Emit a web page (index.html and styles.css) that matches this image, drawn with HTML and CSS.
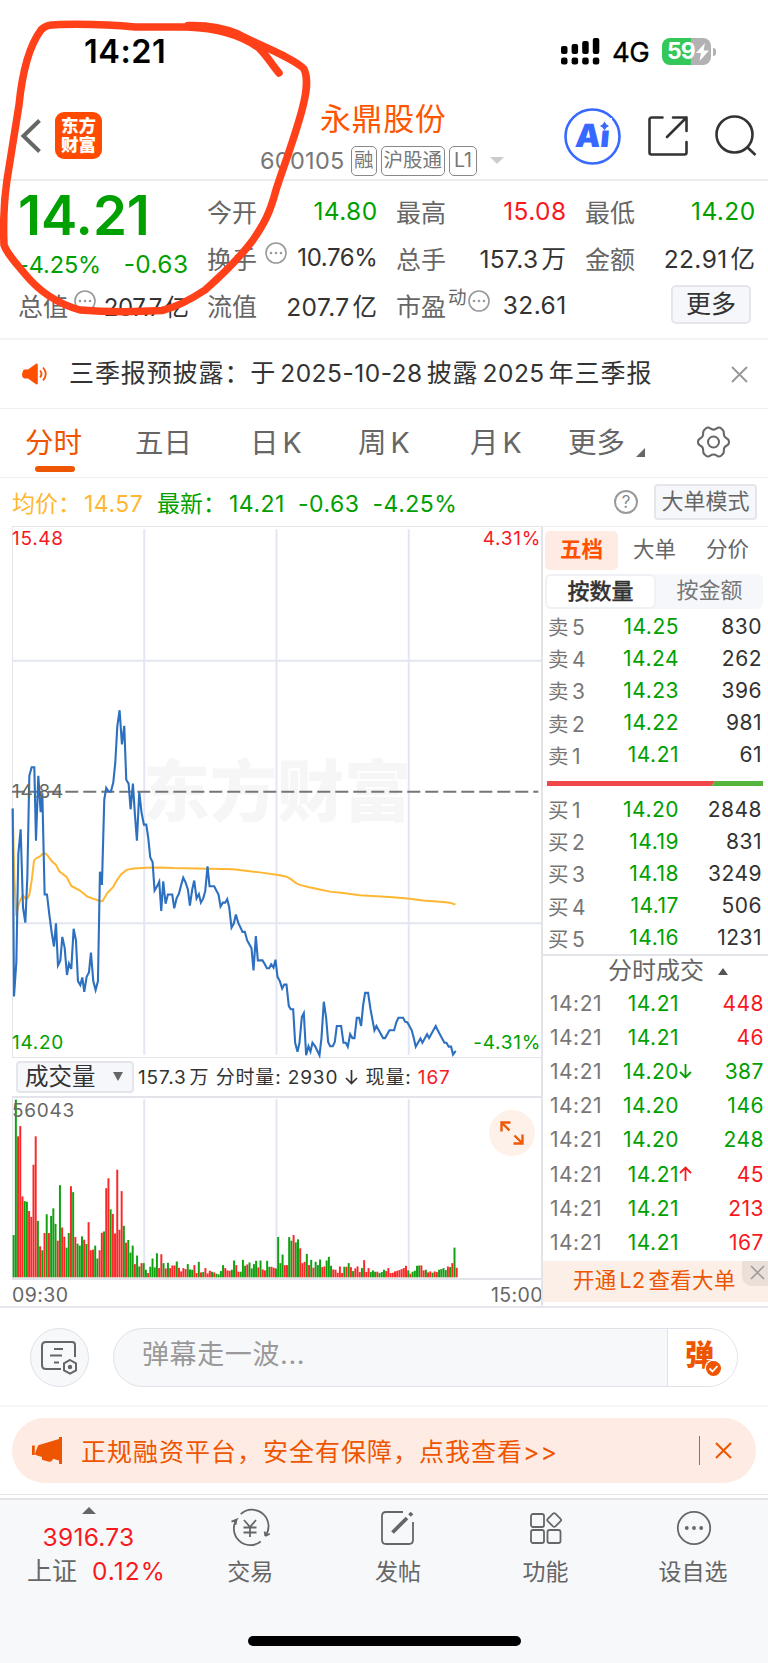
FILE: index.html
```html
<!DOCTYPE html>
<html lang="zh-CN">
<head>
<meta charset="utf-8">
<title>永鼎股份 600105</title>
<link rel="stylesheet" href="styles.css">
</head>
<body>
<div class="screen">
  <div class="status">
    <span class="clock">14:21</span>
    <div class="status-right">
      <svg class="signal" width="39" height="28" viewBox="0 0 39 28">
        <rect x="0" y="9" width="6.5" height="8" rx="2"/><rect x="10.6" y="7" width="6.5" height="10" rx="2"/><rect x="21.2" y="4" width="6.5" height="13" rx="2"/><rect x="31.8" y="1" width="6.5" height="16" rx="2"/>
        <rect x="0" y="20.5" width="6.5" height="7" rx="2.2"/><rect x="10.6" y="20.5" width="6.5" height="7" rx="2.2"/><rect x="21.2" y="20.5" width="6.5" height="7" rx="2.2"/><rect x="31.8" y="20.5" width="6.5" height="7" rx="2.2"/>
      </svg>
      <span class="net">4G</span>
      <div class="battery"><span>59</span>
        <svg width="13" height="18" viewBox="0 0 13 18"><path d="M9 0 0 10h5L3.6 18 13 7.4H7.6z" fill="#fff"/></svg>
      </div>
      <i class="nub"></i>
    </div>
  </div>

  <header class="header">
    <svg class="back" width="20" height="34" viewBox="0 0 20 34"><path d="M18.5 1.5 2.5 17l16 15.500" fill="none" stroke="#666" stroke-width="4"/></svg>
    <div class="logo">东方<br>财富</div>
    <div class="title">
      <h1>永鼎股份</h1>
      <div class="sub"><span class="code">600105</span><span class="tag">融</span><span class="tag">沪股通</span><span class="tag l1">L1</span><i class="drop"></i></div>
    </div>
    <svg class="ai" width="57" height="57" viewBox="0 0 57 57">
      <circle cx="28.500" cy="28.500" r="27" fill="#fff" stroke="#3768ff" stroke-width="2.600"/>
      <text x="11" y="39" class="ai-text" transform="skewX(-5) translate(3 0)">Ai</text>
      <rect x="34" y="10" width="14" height="12.500" fill="#fff"/>
      <path d="M40.500 13.500 42.200 16.300 45 18l-2.800 1.700-1.700 2.800-1.700-2.800L36 18l2.800-1.700z" fill="#3768ff"/>
    </svg>
    <svg class="share" width="40" height="40" viewBox="0 0 40 40" fill="none" stroke="#333" stroke-width="2.600" stroke-linecap="round" stroke-linejoin="round">
      <path d="M14.500 1.500H3.500a2 2 0 0 0-2 2v33a2 2 0 0 0 2 2h33a2 2 0 0 0 2-2V26M25 1.500h13.500V15M38.500 1.500 19 21"/>
    </svg>
    <svg class="search" width="42" height="42" viewBox="0 0 42 42" fill="none" stroke="#333" stroke-width="2.600"><circle cx="19.500" cy="19.500" r="18"/><path d="M32 32l8.500 8"/></svg>
  </header>

  <section class="quote">
    <div class="cell big g">14.21</div>
    <div class="cell"><span>今开</span><b class="g">14.80</b></div>
    <div class="cell"><span>最高</span><b class="r">15.08</b></div>
    <div class="cell"><span>最低</span><b class="g">14.20</b></div>
    <div class="cell chg g"><b class="pct">-4.25%</b><b class="g">-0.63</b></div>
    <div class="cell"><span>换手</span><svg class="dots" viewBox="0 0 22 22"><use href="#dots"/></svg><b class="n">10.76%</b></div>
    <div class="cell"><span>总手</span><b>157.3<em>万</em></b></div>
    <div class="cell"><span>金额</span><b>22.91<em>亿</em></b></div>
    <div class="cell cap"><span>总值</span><svg class="dots" viewBox="0 0 22 22"><use href="#dots"/></svg><b class="n">207.7<em>亿</em></b></div>
    <div class="cell"><span>流值</span><b>207.7<em>亿</em></b></div>
    <div class="cell pe"><span>市盈</span><small>动</small><svg class="dots" viewBox="0 0 22 22"><use href="#dots"/></svg><b>32.61</b></div>
    <div class="cell end"><span class="more">更多</span></div>
  </section>

  <section class="notice">
    <svg width="26" height="22" viewBox="0 0 26 22"><path d="M1 8q0-1.500 1.500-1.500H6L14 .8Q15.800 0 15.800 2v18q0 2-1.800 1.200L6 15.500H2.500Q0 15 0 11z" fill="#ff5000"/><path d="M18 7.500q3 3.500 0 7M21 4.500q5.500 6.500 0 13" fill="none" stroke="#ff5000" stroke-width="1.800"/></svg>
    <p>三季报预披露：于<em>2025-10-28</em>披露<em>2025</em>年三季报</p>
    <svg class="x" width="17" height="17" viewBox="0 0 17 17"><path d="M1 1l15 15M16 1 1 16" stroke="#999" stroke-width="2"/></svg>
  </section>

  <nav class="periods">
    <span class="on">分时</span><span>五日</span><span>日<em>K</em></span><span>周<em>K</em></span><span>月<em>K</em></span><span class="more-tab">更多</span>
    <svg class="corner" width="9" height="9" viewBox="0 0 9 9"><path d="M9 0v9H0z" fill="#666"/></svg>
    <svg class="gear" width="33" height="32" viewBox="0 0 33 32" fill="none" stroke="#666" stroke-width="2"><path d="M8 3.200C10 .8 12 1.200 13.300 2.400c2 1.500 4.400 1.500 6.400 0C21 1.200 23 .8 25 3.200c1.700 1.200 2 2.600 1.800 4.200-.1 2.400 1 4.300 3 5.100 1.600.7 2.200 1.900 2.200 3.500s-.6 2.800-2.200 3.500c-2 .8-3.100 2.700-3 5.100.2 1.600-.1 3-1.800 4.200-2 2.400-4 2-5.300.8-2-1.500-4.400-1.500-6.400 0C12 30.800 10 31.200 8 28.800c-1.700-1.200-2-2.600-1.800-4.200.1-2.400-1-4.300-3-5.100C1.600 18.800 1 17.600 1 16s.6-2.800 2.200-3.500c2-.8 3.100-2.700 3-5.100C6 5.800 6.300 4.400 8 3.200z"/><circle cx="16.500" cy="16" r="5.500"/></svg>
  </nav>

  <div class="info">
    <span class="avg">均价：<em>14.57</em></span>
    <span class="last g">最新：<em>14.21</em><em>-0.63</em><em>-4.25%</em></span>
    <span class="help">?</span><span class="mode">大单模式</span>
  </div>

  <main class="board">
    <div class="charts">
      <div class="price">
        <span class="watermark">东方财富</span>
        <svg class="plot" viewBox="36 18 1588 1487" preserveAspectRatio="none" fill="none">
          <g stroke="#e3e6f0" stroke-width="2"><path d="M36 393H1624M36 1130H1624M433 24V1499M830 24V1499M1227 24V1499"/></g>
          <path d="M36 761H190M196 761H1616" stroke="#757575" stroke-width="2" class="dash"/>
          <polyline stroke="#ffb733" stroke-width="2" points="38,808 43,1000 49,1110 55,1080 62,1062 69,1052 76,1060 82,1060 88,1050 95,1010 102,955 108,948 120,942 130,934 137,934 145,942 155,955 168,966 178,984 200,1000 214,1025 240,1038 262,1055 300,1067 308,1067 322,1045 340,1028 347,1015 363,993 380,980 400,976 440,974 480,973 520,975 700,978 780,987 840,995 860,999 870,1004 890,1018 900,1022 925,1028 960,1035 990,1041 1030,1045 1080,1051 1130,1054 1180,1057 1230,1061 1270,1066 1330,1070 1350,1072 1367,1077"/>
          <polyline stroke="#2d70bf" stroke-width="2.100" points="38,808 42,1335 49,1240 55,935 62,866 69,1085 76,1128 82,1000 88,716 95,692 103,692 108,898 115,716 122,818 127,765 134,1049 141,1049 148,1105 155,1155 162,1195 168,1130 174,1248 181,1235 187,1168 194,1198 201,1275 207,1243 214,1258 221,1145 228,1178 234,1292 241,1303 247,1282 253,1322 260,1280 267,1268 273,1212 280,1292 287,1317 294,1292 300,985 306,1022 313,783 319,750 326,760 333,760 340,735 346,680 352,578 359,532 366,628 373,576 379,727 386,738 392,810 399,738 405,825 411,898 418,762 425,820 432,853 439,853 445,890 451,945 458,958 464,1038 471,1027 478,1013 484,1095 490,1012 497,1075 504,1049 517,1049 523,1088 530,1060 537,1047 544,1022 550,1002 557,1015 564,1035 570,1080 577,1035 583,1010 590,1060 597,1048 603,1072 610,1060 616,1040 623,970 629,1026 643,1026 649,1037 656,1049 662,1083 669,1072 676,1072 682,1062 688,1085 695,1142 702,1130 708,1105 715,1128 722,1142 728,1154 735,1154 742,1178 748,1188 755,1200 761,1262 768,1166 774,1234 788,1234 795,1245 801,1256 808,1256 814,1245 821,1254 827,1232 833,1280 840,1292 847,1313 853,1302 860,1302 867,1362 873,1371 880,1371 886,1465 893,1490 899,1465 906,1393 912,1382 919,1500 926,1475 932,1490 938,1465 946,1475 959,1500 965,1452 972,1350 979,1395 985,1463 991,1475 999,1475 1005,1463 1011,1418 1024,1418 1031,1465 1038,1465 1044,1476 1051,1441 1058,1452 1064,1452 1071,1395 1078,1395 1084,1418 1090,1360 1096,1325 1105,1325 1112,1370 1118,1400 1124,1430 1130,1418 1137,1430 1150,1452 1156,1452 1169,1430 1183,1430 1190,1407 1196,1395 1210,1395 1216,1406 1223,1408 1236,1430 1242,1452 1248,1476 1262,1453 1268,1465 1282,1441 1288,1452 1308,1418 1314,1430 1334,1465 1340,1465 1347,1476 1354,1476 1360,1498 1368,1488"/>
        </svg>
        <span class="lab tl r">15.48</span><span class="lab tr r">4.31%</span>
        <span class="lab ml">14.84</span>
        <span class="lab bl g">14.20</span><span class="lab br g">-4.31%</span>
      </div>
      <div class="vol-head"><span class="vol-btn">成交量<svg width="10" height="9" viewBox="0 0 10 9"><path d="M0 0h10L5 9z" fill="#666"/></svg></span><p>157.3<em>万</em> 分时量: 2930 <svg class="dn" width="13" height="16" viewBox="0 0 13 16"><path d="M6.500 1v13.500M1 9l5.500 5.500L12 9" fill="none" stroke="#333" stroke-width="1.700"/></svg> 现量: <span class="r">167</span></p></div>
      <div class="volume">
        <svg class="plot" id="volume" viewBox="36 126 1588 545" preserveAspectRatio="none">
          <path d="M433 130V671M830 130V671M1227 130V671" stroke="#e3e6f0" stroke-width="2" fill="none"/>
        </svg>
        <span class="lab vmax">56043</span>
        <span class="expand"><svg width="24" height="24" viewBox="0 0 24 24" fill="none" stroke="#ee5a0a" stroke-width="2.400"><path d="M1.500 10.500v-9h9M1.500 1.500l8 8M13.500 22.500h9v-9M22.500 22.500l-8-8"/></svg></span>
      </div>
      <div class="times"><span>09:30</span><span>15:00</span></div>
    </div>

    <aside class="side">
      <div class="side-tabs"><span class="on">五档</span><span>大单</span><span>分价</span></div>
      <div class="seg"><span class="on">按数量</span><span>按金额</span></div>
      <div class="book">
        <div><span>卖<em>5</em></span><b>14.25</b><i>830</i></div>
        <div><span>卖<em>4</em></span><b>14.24</b><i>262</i></div>
        <div><span>卖<em>3</em></span><b>14.23</b><i>396</i></div>
        <div><span>卖<em>2</em></span><b>14.22</b><i>981</i></div>
        <div><span>卖<em>1</em></span><b>14.21</b><i>61</i></div>
      </div>
      <svg class="ratio" width="216" height="5" viewBox="0 0 216 5"><path d="M0 0h168l-3.500 5H0z" fill="#f04848"/><path d="M168 0h48v5h-51.500z" fill="#55b53c"/></svg>
      <div class="book">
        <div><span>买<em>1</em></span><b>14.20</b><i>2848</i></div>
        <div><span>买<em>2</em></span><b>14.19</b><i>831</i></div>
        <div><span>买<em>3</em></span><b>14.18</b><i>3249</i></div>
        <div><span>买<em>4</em></span><b>14.17</b><i>506</i></div>
        <div><span>买<em>5</em></span><b>14.16</b><i>1231</i></div>
      </div>
      <div class="deal-head">分时成交<svg width="10" height="7" viewBox="0 0 10 7"><path d="M5 0l5 7H0z" fill="#555"/></svg></div>
      <div class="deals">
        <div><span>14:21</span><b>14.21</b><u></u><i class="r">448</i></div>
        <div><span>14:21</span><b>14.21</b><u></u><i class="r">46</i></div>
        <div><span>14:21</span><b>14.20</b><u><svg class="g" viewBox="0 0 13 16"><path d="M6.500 1v13.500M1 9l5.500 5.500L12 9"/></svg></u><i class="g">387</i></div>
        <div><span>14:21</span><b>14.20</b><u></u><i class="g">146</i></div>
        <div><span>14:21</span><b>14.20</b><u></u><i class="g">248</i></div>
        <div><span>14:21</span><b>14.21</b><u><svg class="r" viewBox="0 0 13 16"><path d="M6.500 15V1.500M1 7l5.500-5.500L12 7"/></svg></u><i class="r">45</i></div>
        <div><span>14:21</span><b>14.21</b><u></u><i class="r">213</i></div>
        <div><span>14:21</span><b>14.21</b><u></u><i class="r">167</i></div>
      </div>
      <div class="l2">开通<em>L2</em>查看大单<span class="l2x"><svg width="15" height="15" viewBox="0 0 15 15"><path d="M1 1l13 13M14 1 1 14" stroke="#999" stroke-width="1.500"/></svg></span></div>
    </aside>
  </main>

  <section class="chat">
    <span class="round"><svg width="38" height="34" viewBox="0 0 38 34" fill="none" stroke="#666" stroke-width="2"><path d="M20 28H5q-4 0-4-4V5q0-4 4-4h26q3 0 3 3v12M13 8h9M9 14.500h12M13 21.500h5"/><path d="M29 19l6 3.400v6.900l-6 3.400-6-3.400v-6.900z"/><circle cx="29" cy="26" r="1.200" fill="#666"/></svg></span>
    <div class="input"><span class="ph">弹幕走一波...</span><span class="dan">弹<svg width="15" height="15" viewBox="0 0 15 15"><circle cx="7.500" cy="7.500" r="7.500" fill="#ee5500"/><path d="M3.500 7.500l3 3 5-5.500" fill="none" stroke="#fff" stroke-width="1.800"/></svg></span></div>
  </section>

  <section class="promo-wrap">
    <div class="promo">
      <svg width="31" height="27" viewBox="0 0 31 27" fill="#ee5500"><path d="M0 8.500h2.800V18H0zM5.500 10q0-1.500 1.500-2L27 2V0h3v27h-3v-3.500l-6-1.800q-1 3.500-4 3l-7-2V20l-5-1.500q-2-.5-2-2z"/></svg>
      <p>正规融资平台，安全有保障，点我查看&gt;&gt;</p>
      <i></i>
      <svg width="17" height="17" viewBox="0 0 17 17"><path d="M1 1l15 15M16 1 1 16" stroke="#ee5500" stroke-width="2"/></svg>
    </div>
  </section>

  <footer class="tabbar">
    <div class="index"><svg width="14" height="7" viewBox="0 0 14 7"><path d="M7 0l7 7H0z" fill="#666"/></svg><b>3916.73</b><p>上证<b>0.12%</b></p></div>
    <div class="tab"><svg width="40" height="36" viewBox="1 0 40 36" fill="none" stroke="#666" stroke-width="1.800"><path d="M10.700 4.200A16.500 16.500 0 0 1 35.300 26l4.500-2.300M35.300 26l-.6-4.500M30.700 31.500A16.500 16.500 0 0 1 6.500 9.700l-5 2M6.500 9.700l-1 5"/><path d="M14 10l6 7 6-7M20 17v10M13.500 17.500h13M13.500 22.500h13"/></svg><span>交易</span></div>
    <div class="tab"><svg width="36" height="36" viewBox="0 0 36 36" fill="none" stroke="#666" stroke-width="1.800"><path d="M23 2H6Q2 2 2 6v24q0 4 4 4h23q4 0 4-4V12"/><path d="M12.500 22.500 27 8M29.500 5.500l2.500-2.500" stroke-width="3.800"/></svg><span>发帖</span></div>
    <div class="tab"><svg width="34" height="34" viewBox="0 0 34 34" fill="none" stroke="#666" stroke-width="1.800"><rect x="2" y="3" width="13" height="13" rx="2"/><rect x="2" y="19" width="13" height="13" rx="2"/><rect x="18.500" y="19" width="13" height="13" rx="2"/><path d="M24 2.600q1.200-1 2.400 0l5.200 5.200q1.200 1.200 0 2.400l-5.200 5.200q-1.200 1-2.400 0l-5.200-5.200q-1.200-1.200 0-2.400z"/></svg><span>功能</span></div>
    <div class="tab"><svg width="36" height="36" viewBox="0 0 36 36"><circle cx="18" cy="18" r="16.200" fill="none" stroke="#666" stroke-width="1.800"/><g fill="#666"><circle cx="10.800" cy="18" r="1.900"/><circle cx="18" cy="18" r="1.900"/><circle cx="25.200" cy="18" r="1.900"/></g></svg><span>设自选</span></div>
  </footer>
  <div class="home"><i></i></div>

  <svg class="marker" width="320" height="330" viewBox="0 0 320 330" fill="none" stroke="#ff4019" stroke-linecap="round" stroke-linejoin="round">
    <path stroke-width="7.500" d="M188 25.500C206 25 222 27 238 34C256 44 294 58 304 69C309 80 306 95 302 110C293 143 283 168 276 190C270 213 264 224 253 240C238 260 222 275 205 290C190 300 177 307 162 310.500C135 312 105 312 80 310C55 303 38 290 25 274C15 262 7 254 4 245C3 220 4 200 7 180C12 150 16 125 19 105C22 75 29 46 41 30C46 24 53 25 60 24.500C90 24 115 25 135 27H187C215 28 240 34 259 48C268 57 272 65 279 73"/>
    <path stroke-width="5" d="M200 26.500Q235 32 262 45"/>
  </svg>
</div>

<svg width="0" height="0" class="defs"><defs><g id="dots"><circle cx="11" cy="11" r="10" fill="none" stroke="#999" stroke-width="1.600"/><g fill="#999"><circle cx="6" cy="11" r="1.300"/><circle cx="11" cy="11" r="1.300"/><circle cx="16" cy="11" r="1.300"/></g></g></defs></svg>
<script src="volume.js"></script>
</body>
</html>
```

FILE: styles.css
```css
* { box-sizing: border-box; }
body { margin: 0; background: #fff; }
body, h1, p { margin: 0; }
h1, b, i, em, small, u { font: inherit; font-style: normal; text-decoration: none; }
svg { display: block; flex: none; overflow: visible; }
.defs { position: absolute; }
.screen { position: relative; width: 768px; height: 1663px; overflow: hidden; font-family: Inter, "Noto Sans CJK SC", sans-serif; font-weight: 400; color: #333; white-space: nowrap; font-feature-settings: "calt" 0; }
.g { color: #00a000; }
.r { color: #f8191e; }

.status { height: 85px; display: flex; justify-content: space-between; padding: 33px 52px 0 84px; color: #000; }
.clock { font-size: 32.500px; line-height: 37px; font-weight: 600; letter-spacing: 0.5px; }
.status-right { display: flex; align-items: flex-start; }
.signal { margin-top: 4px; margin-right: 12px; }
.net { width: 50px; font-size: 27.500px; line-height: 38px; font-weight: 400; -webkit-text-stroke: 0.3px #000; letter-spacing: -0.5px; }
.battery { display: flex; align-items: center; gap: 1px; width: 49px; height: 27px; margin-top: 5px; padding-left: 5px; border-radius: 8px; background: linear-gradient(90deg, #34c759 59%, #b2b2b4 59%); color: #fff; font-size: 23px; line-height: 27px; font-weight: 700; letter-spacing: -1px; }
.nub { width: 3px; height: 8px; margin: 15px 0 0 2px; border-radius: 0 3px 3px 0; background: #b2b2b4; }

.header { display: flex; height: 96px; border-bottom: 2px solid #ebebed; }
.back { margin: 34px 0 0 21px; }
.logo { width: 47px; height: 47px; margin: 27px 0 0 14px; border-radius: 9px; background: #ff4a00; color: #fff; font-size: 17.500px; line-height: 19px; font-weight: 900; text-align: center; padding-top: 4px; }
.title { width: 244px; margin: 14px 0 0 158px; }
.title h1 { margin-left: 60px; color: #ff5500; font-size: 31px; line-height: 40px; letter-spacing: 0.6px; }
.sub { display: flex; align-items: center; height: 31px; margin-top: 6px; color: #777; }
.code { width: 91px; font-size: 23.500px; letter-spacing: 0.3px; }
.tag { height: 30px; margin-right: 4px; padding: 0 2px; border: 1.500px solid #888; border-radius: 5px; font-size: 19.500px; line-height: 27px; }
.l1 { width: 28px; padding: 0; text-align: center; }
.drop { margin-left: 9px; border: 7px solid transparent; border-top-color: #ccc; border-bottom: 0; }
.ai { margin: 23px 0 0 60px; }
.ai-text { font: 900 32px Inter, sans-serif; fill: #3768ff; letter-spacing: -0.5px; }
.share { margin: 31px 0 0 27px; }
.search { margin: 30px 0 0 27px; }

.quote { display: grid; grid-template-columns: repeat(4, 169px); grid-auto-rows: 47.300px; column-gap: 20px; height: 159px; padding: 6px 0 0 19px; border-bottom: 2px solid #f3f3f5; }
.cell { display: flex; align-items: center; justify-content: space-between; font-size: 24.500px; }
.cell span { margin-left: -1px; font-size: 25px; color: #666; }
.cell b { letter-spacing: 0.4px; margin-right: -0.500px; }
.cell .n { font-size: 24px; letter-spacing: -0.4px; }
.cell em { margin-left: 3px; }
.cell .dots { width: 22px; height: 22px; margin: -9px 0 0 -2px; }
.cell small { align-self: flex-start; margin: 1px 0 0 2px; font-size: 18.500px; color: #666; }
.pe .dots { margin-left: 1px; }
.pe b { margin-left: auto; }
.cap { justify-content: flex-start; }
.cap .dots { margin-left: 6px; }
.cap b { margin-left: auto; }
.cell.big { font-size: 54.500px; font-weight: 600; padding-top: 9px; letter-spacing: 0; margin-left: -1px; }
.chg { padding-top: 13px; margin-left: -1px; }
.chg .pct { font-size: 23.500px; letter-spacing: -0.1px; }
.cell.end { justify-content: flex-end; padding-right: 4px; }
.more { width: 80px; height: 39px; border: 2px solid #e4e6ec; border-radius: 5px; background: #f6f7fa; text-align: center; line-height: 34px; }
.cell .more { margin-top: -2px; color: #333; font-size: 25px; }

.notice { display: flex; align-items: center; height: 69px; padding: 0 20px 0 22px; border-bottom: 1px solid #f0f0f2; }
.notice p { margin: -2px 0 0 21px; font-size: 25px; line-height: 40px; letter-spacing: 0.9px; }
.notice em { margin: 0 4px 0 4px; letter-spacing: 0.5px; font-size: 24.500px; }
.notice .x { margin-left: auto; }

.periods { position: relative; display: flex; align-items: center; height: 69px; padding-left: 25px; border-bottom: 1px solid #f0f0f2; font-size: 28.500px; color: #666; }
.periods span { width: 111px; line-height: 66px; }
.periods em { margin-left: 4px; }
.periods .on { position: relative; color: #ee5500; width: 110px; }
.periods span:nth-child(2) { width: 115px; }
.periods span:nth-child(3) { width: 108px; }
.periods span:nth-child(4) { width: 112px; }
.periods span:nth-child(5) { width: 98px; }
.periods .on::after { content: ""; position: absolute; left: 10px; bottom: 4px; width: 40px; height: 6px; border-radius: 3px; background: #ee5500; }
.periods .more-tab { width: 68px; }
.corner { margin-top: 19px; }
.gear { margin: -2px 0 0 52px; }

.info { display: flex; align-items: center; height: 48px; padding: 0 0 1px 12px; font-size: 23px; }
.avg { width: 145px; color: #ffb733; }
.info em { margin: 0 10px 0 3px; letter-spacing: 0.5px; }
.last { flex: 1; }
.help { width: 24px; height: 24px; margin-right: 16px; border: 2px solid #999; border-radius: 50%; color: #888; font-size: 17px; line-height: 20px; text-align: center; }
.mode { width: 103px; height: 36px; margin-right: 11px; border: 2px solid #e4e6ec; border-radius: 4px; background: #f6f7fa; color: #666; font-size: 22px; line-height: 31px; text-align: center; }

.board { display: flex; height: 782px; border-bottom: 2px solid #e6e7ee; }
.charts { width: 541px; padding-left: 12px; }
.price { position: relative; height: 532px; border: 1px solid #e2e4ea; border-right: 0; }
.plot { position: absolute; left: -1px; top: 0; width: 529px; height: 100%; }
.plot path, .plot polyline { vector-effect: non-scaling-stroke; }
.dash { stroke-dasharray: 13 5; }
.watermark { position: absolute; left: 130px; top: 219px; color: #f6f6f6; font-size: 67px; line-height: 92px; font-weight: 900; }
.lab { position: absolute; font-size: 19px; line-height: 22px; letter-spacing: 0.7px; }
.tl { left: -1px; top: 1px; }
.tr { right: 0; top: 1px; }
.ml { left: -1px; top: 254px; color: #666; }
.bl { left: -1px; bottom: 3px; }
.br { right: 0; bottom: 3px; }
.vol-head { display: flex; align-items: center; height: 38px; padding-left: 4px; }
.vol-btn { display: flex; align-items: center; justify-content: space-between; width: 118px; height: 32px; margin-right: 4px; padding: 0 9px 1px 7px; border: 2px solid #e4e6ec; border-radius: 4px; background: #f6f7fa; font-size: 23.500px; line-height: 28px; }
.vol-head em { margin-left: 3px; }
.vol-head p { font-size: 19px; line-height: 30px; letter-spacing: 0.85px; padding-top: 2px; }
.dn { display: inline-block; vertical-align: -1px; margin: 0 1px; }
.volume { position: relative; height: 184px; border: 2px solid #e2e4ea; border-width: 2px 0 2px 1px; }
.vmax { left: -1px; top: 2px; color: #666; }
.expand { position: absolute; right: 6px; top: 12px; display: flex; align-items: center; justify-content: center; width: 46px; height: 46px; border-radius: 50%; background: #fef1e9; }
.times { display: flex; justify-content: space-between; font-size: 19.500px; line-height: 30px; color: #666; letter-spacing: 0.4px; margin-right: -2px; }

.side { width: 227px; padding-left: 3px; border-left: 2px solid #e2e4ea; border-top: 1px solid #eceef2; }
.side-tabs { display: flex; padding-top: 4px; height: 47px; margin-left: -1px; font-size: 21.500px; color: #666; }
.side-tabs span { width: 73px; height: 39px; border-radius: 5px; line-height: 37px; text-align: center; }
.side-tabs .on { background: #feebe3; color: #ff5000; font-weight: 700; }
.seg { display: flex; width: 218px; height: 35px; margin-left: -1px; border-radius: 6px; background: #f6f7fa; font-size: 22px; line-height: 31px; color: #777; }
.seg span { flex: 1; text-align: center; padding-top: 1px; }
.seg .on { border: 2px solid #f0f1f4; border-radius: 6px; background: #fff; color: #333; font-weight: 500; -webkit-text-stroke: 0.3px #333; line-height: 29px; }
.book { padding: 1px 0 0 2px; height: 162px; }
.book div, .deals div { display: flex; align-items: center; height: 32.200px; font-size: 21px; letter-spacing: 0.5px; }
.book span { width: 63px; color: #777; font-size: 20.500px; }
.book em { margin-left: 3px; font-size: 21px; }
.book b, .deals b { width: 68px; text-align: right; color: #00a000; }
.book i { width: 83px; text-align: right; }
.ratio { margin: 10px 0 6px 1px; }
.deal-head { display: flex; justify-content: center; align-items: center; gap: 14px; height: 32px; margin: 0 0 0 -3px; padding-left: 25px; border-top: 2px solid #e2e4ea; font-size: 24px; line-height: 30px; color: #666; }
.deals { padding-left: 4px; }
.deals div { height: 34.200px; }
.deals span { width: 61px; color: #777; }
.deals u { width: 17px; }
.deals u svg { width: 13px; height: 16px; fill: none; stroke: currentColor; stroke-width: 1.800; }
.deals i { width: 68px; text-align: right; }
.l2 { position: relative; height: 41px; margin: 1px 0 0 -3px; padding-left: 30px; background: #fcefe7; color: #ee5500; font-size: 21.500px; line-height: 38px; letter-spacing: 0.3px; }
.l2 em { margin: 0 3px; }
.l2x { position: absolute; right: 0; top: 0; width: 26px; height: 25px; border-radius: 0 0 0 10px; background: #eadfd9; padding: 4px 0 0 8px; }

.chat { display: flex; height: 99px; padding: 20px 0 0 30px; border-bottom: 2px solid #f5f5f7; }
.round { display: flex; align-items: center; justify-content: center; width: 59px; height: 59px; margin-right: 24px; padding-left: 1px; border: 1.500px solid #dfe1e8; border-radius: 50%; background: #f7f8fa; }
.input { display: flex; width: 625px; height: 59px; border: 1.500px solid #dfe1e8; border-radius: 30px; background: #f7f8fa; overflow: hidden; }
.ph { flex: 1; padding-left: 28px; color: #999; font-size: 27px; line-height: 52px; letter-spacing: 0.6px; }
.dan { position: relative; width: 70px; padding-left: 17px; border-left: 1.500px solid #dfe1e8; background: #fff; color: #ee5500; font-size: 29px; line-height: 54px; font-weight: 900; }
.dan svg { position: absolute; left: 38px; top: 32px; border-radius: 50%; box-shadow: 0 0 0 1.500px #fff; }
.promo-wrap { height: 88px; padding: 11px 12px 0; border-bottom: 1.500px solid #e4e6ea; }
.promo { display: flex; align-items: center; height: 65px; padding: 0 24px 0 20px; border-radius: 33px; background: #feece4; color: #ee5500; }
.promo p { margin: 0 0 2px 18px; font-size: 25px; letter-spacing: 1px; }
.promo i { width: 1.500px; height: 29px; margin: 0 15px 0 auto; background: #ee5500; }

.tabbar { display: flex; height: 168px; margin-top: 3px; border-top: 2px solid #e4e4e6; background: #f7f8fa; color: #666; }
.index { width: 177px; padding: 7px 0 0; display: flex; flex-direction: column; align-items: center; font-size: 24.500px; line-height: 34px; }
.index b { color: #f8191e; letter-spacing: 0.3px; margin-top: 6px; }
.index p { width: 177px; padding-left: 27px; font-size: 25px; }
.index p b { margin-left: 15px; font-size: 24.500px; letter-spacing: 1px; }
.tab { width: 147.600px; display: flex; flex-direction: column; align-items: center; padding-top: 10px; font-size: 23px; line-height: 34px; }
.tab span { margin: 9px 0 0 -1px; }
.tab svg { height: 36px; }
.home { position: absolute; left: 248px; top: 1636px; width: 273px; height: 10px; border-radius: 5px; background: #000; }
.marker { position: absolute; left: 0; top: 0; }
```

FILE: volume.js
```js
// One bar per trading minute: top edge of the bar followed by its colour (g = falling, r = rising).
const bars = `541g 131g 242r 211r 424r 438g 440g 468r 486r 328r 242r 498g 575r 587g 535r 478g 535r 483g 460g 507g
558r 390g 518r 546r 579g 535g 393r 411g 547r 567g 573g 545g 555r 568g 502r 587r 585r 573g 612g 587r
534r 530g 399r 369r 463g 477r 536r 343r 525r 408r 513g 564r 556g 594g 573g 629r 603g 636g 626r 626g
646g 656r 637g 612g 639g 596g 641r 599r 626g 642r 625g 641r 633r 633r 621g 640r 651r 641r 644r 629g
645g 646g 632r 656r 622g 654r 653g 641r 657r 649r 652g 654r 658g 660g 650g 632g 641r 648r 649r 646g
618g 632r 652r 652g 616g 634g 630r 624g 642g 629g 619g 639r 618g 645r 648r 619g 637g 637r 640r 642g
547g 626g 600g 632r 632r 547g 558g 541r 563g 554g 581r 626r 622r 598g 632r 616g 640r 622g 632g 615g
638r 636r 618g 607g 634g 645r 646r 655r 636r 656r 637g 637r 626g 638r 650g 642r 636r 653r 641g 617r
653r 641r 653g 648g 652g 652r 656g 653g 646g 650r 641r 656r 655r 651r 649r 647r 644r 641r 634r 648g
658r 652g 649g 634g 633g 633r 648r 646g 654r 651r 655g 651r 653r 646g 644g 641g 647g 636r 638g 626r
579g 640r`.split(/\s+/);
const svg = document.getElementById('volume');
const step = 6.617;
bars.forEach((bar, i) => {
  const top = parseInt(bar, 10);
  const rect = document.createElementNS('http://www.w3.org/2000/svg', 'rect');
  rect.setAttribute('x', 38 + i * step);
  rect.setAttribute('y', top);
  rect.setAttribute('width', 5.9);
  rect.setAttribute('height', 669 - top);
  rect.setAttribute('fill', bar.endsWith('g') ? '#10a010' : '#fa2828');
  svg.appendChild(rect);
});
```
